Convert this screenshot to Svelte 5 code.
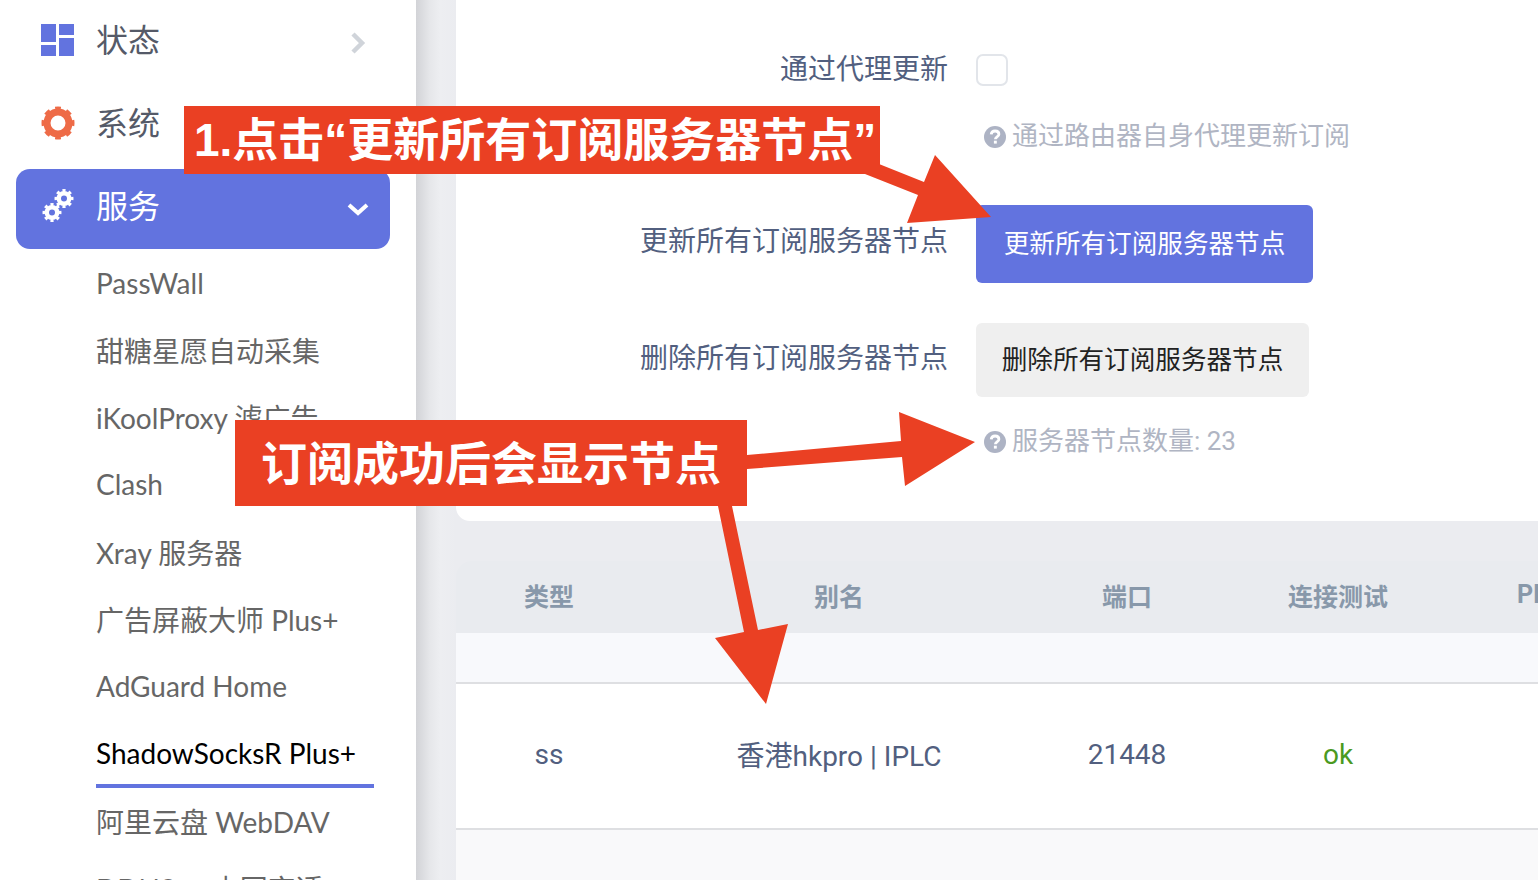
<script>
  const subMenu = ['PassWall', '甜糖星愿自动采集', 'iKoolProxy 滤广告', 'Clash', 'Xray 服务器', '广告屏蔽大师 Plus+', 'AdGuard Home', 'ShadowSocksR Plus+', '阿里云盘 WebDAV', 'DDNS — 内网穿透']
  const active = 'ShadowSocksR Plus+'
  const columns = ['类型', '别名', '端口', '连接测试', 'PING']
</script>

{#snippet help(text)}
  <p class="help">
    <svg class="help-icon" viewBox="0 0 24 24" width="24" height="24">
      <circle cx="12" cy="12" r="11" fill="#adb3c4" />
      <path d="M8.200 9.400c.2-2.200 1.800-3.400 3.900-3.400 2.200 0 3.800 1.300 3.800 3.200 0 2.700-3.500 2.800-3.500 5" fill="none" stroke="#fff" stroke-width="2.800" />
      <rect x="10.900" y="15.700" width="2.900" height="2.900" fill="#fff" />
    </svg>
    {text}
  </p>
{/snippet}

{#snippet gear(cx, cy, r, hole, color)}
  <circle {cx} {cy} r={(r + hole) / 2 - 1} fill="none" stroke={color} stroke-width={r - hole - 2} />
  <circle {cx} {cy} r={r - 1.500} fill="none" stroke={color} stroke-width="3" pathLength="80" stroke-dasharray="5 5" stroke-dashoffset="2.500" />
{/snippet}

<div class="page">
  <aside class="sidebar">
    <div class="menu-item">
      <svg class="menu-icon" viewBox="0 0 34 34" width="34" height="34">
        <g fill="#6273df">
          <rect x="0" y="1" width="15" height="18" />
          <rect x="18" y="1" width="15" height="11" />
          <rect x="0" y="22" width="15" height="11" />
          <rect x="18" y="15" width="15" height="18" />
        </g>
      </svg>
      <span>状态</span>
      <svg class="chevron right" viewBox="0 0 20 24" width="20" height="24">
        <path d="M5 3l9 9-9 9" fill="none" stroke="#d0d4da" stroke-width="4.500" />
      </svg>
    </div>
    <div class="menu-item system">
      <svg class="menu-icon" viewBox="0 0 34 34" width="34" height="34">
        {@render gear(17, 17, 16.500, 7.500, '#ee6b47')}
      </svg>
      <span>系统</span>
    </div>
    <div class="menu-item open">
      <svg class="menu-icon" viewBox="0 0 34 34" width="34" height="34">
        {@render gear(11, 20.500, 9.500, 3, '#fff')}
        {@render gear(23, 6.500, 9.500, 3, '#fff')}
      </svg>
      <span>服务</span>
      <svg class="chevron down" viewBox="0 0 24 24" width="24" height="24">
        <path d="M3 8l9 8 9-8" fill="none" stroke="#fff" stroke-width="4" />
      </svg>
    </div>
    <ul class="sub-menu">
      {#each subMenu as item}
        <li class:active={item === active}>{item}</li>
      {/each}
    </ul>
  </aside>

  <main class="main">
    <section class="card">
      <div class="row first">
        <span class="label">通过代理更新</span>
        <span class="checkbox"></span>
      </div>
      <div class="row help-row one">
        <span></span>
        {@render help('通过路由器自身代理更新订阅')}
      </div>
      <div class="row update">
        <span class="label">更新所有订阅服务器节点</span>
        <button class="btn btn-primary">更新所有订阅服务器节点</button>
      </div>
      <div class="row remove">
        <span class="label">删除所有订阅服务器节点</span>
        <button class="btn btn-plain">删除所有订阅服务器节点</button>
      </div>
      <div class="row help-row two">
        <span></span>
        {@render help('服务器节点数量: 23')}
      </div>
    </section>

    <section class="table">
      <div class="tr thead">
        {#each columns as col}
          <div>{col}</div>
        {/each}
      </div>
      <div class="spacer"></div>
      <div class="tr tbody">
        <div>ss</div>
        <div>香港hkpro | IPLC</div>
        <div>21448</div>
        <div class="ok">ok</div>
        <div></div>
      </div>
      <div class="foot"></div>
    </section>
  </main>

  <!-- annotations drawn on top of the screenshot -->
  <svg class="arrows" viewBox="0 0 1538 880" width="1538" height="880">
    <g fill="#ea4023">
      <polygon points="865,174 879,164 924,182 935,155 991,217 907,223 918,195" />
      <polygon points="747,455 901,441 899,412 975,442 905,486 902,457 747,469" />
      <polygon points="718,506 732,506 758,630 788,624 766,704 715,638 744,632" />
    </g>
  </svg>
  <div class="note note-one">1.点击“更新所有订阅服务器节点”</div>
  <div class="note note-two">订阅成功后会显示节点</div>
</div>

<style>
  :global(body) {
    margin: 0;
    overflow: hidden;
  }

  .page {
    position: relative;
    display: flex;
    width: 1538px;
    height: 880px;
    overflow: hidden;
    font-family: "Roboto", "Noto Sans CJK SC", sans-serif;
    background: #f7f8fb;
  }

  .sidebar {
    flex: 0 0 416px;
    background: #fff;
    padding-left: 16px;
    box-sizing: border-box;
    height: 880px;
    overflow: hidden;
  }

  .menu-item {
    display: flex;
    align-items: center;
    width: 374px;
    height: 80px;
    box-sizing: border-box;
    padding: 0 20px 0 25px;
    font-size: 32px;
    color: #555a68;
    margin-bottom: 3px;
  }

  .menu-item span {
    margin-left: 21px;
    padding-bottom: 4px;
    flex: 1;
  }

  .menu-icon {
    flex: none;
    overflow: visible;
  }

  .chevron.right {
    margin: 6px 2px 0 0;
  }

  .menu-item.system {
    margin-bottom: 6px;
  }

  .menu-item.open {
    margin-bottom: 1px;
    background: #6273df;
    border-radius: 14px;
    color: #fff;
  }

  .menu-item.open span {
    padding-bottom: 10px;
  }

  .sub-menu {
    list-style: none;
    margin: 0;
    padding: 0;
  }

  .sub-menu li {
    height: 67.25px;
    box-sizing: border-box;
    margin-left: 80px;
    width: 278px;
    padding-bottom: 2px;
    display: flex;
    align-items: center;
    font-family: "Lato", "Noto Sans CJK SC", sans-serif;
    font-size: 28px;
    color: #666;
    white-space: nowrap;
  }

  .sub-menu li.active {
    color: #000;
    padding: 2px 0 0;
    border-bottom: 4px solid #6273df;
  }

  .main {
    flex: 1;
    min-width: 0;
    padding-left: 40px;
    background: linear-gradient(90deg, #d2d3d7 0, #e6e7ea 14px, #edeef1 24px, #ebecf0 40px);
  }

  .card {
    height: 521px;
    box-sizing: border-box;
    padding-top: 52px;
    background: #fff;
    border-bottom-left-radius: 14px;
  }

  .row {
    display: grid;
    grid-template-columns: 492px auto;
    column-gap: 28px;
    align-items: center;
    justify-items: start;
  }

  .label {
    justify-self: end;
    font-size: 28px;
    color: #525f7f;
    line-height: 36px;
  }

  .update .label {
    padding-bottom: 4px;
  }

  .remove .label {
    padding-bottom: 2px;
  }

  .checkbox {
    width: 32px;
    height: 32px;
    box-sizing: border-box;
    border: 2px solid #e2e5ea;
    border-radius: 7px;
    background: #fff;
  }

  .help-row.one {
    margin-top: 30px;
  }

  .help-row.two {
    margin-top: 26px;
  }

  .update {
    margin-top: 51px;
  }

  .remove {
    margin-top: 40px;
  }

  .help {
    display: flex;
    align-items: center;
    gap: 5px;
    margin: 0 0 0 7px;
    font-size: 26px;
    line-height: 36px;
    color: #b0b5c3;
  }

  .help-icon {
    flex: none;
    margin-top: 2px;
  }

  .btn {
    border: 0;
    border-radius: 6px;
    font-family: inherit;
    font-size: 25.6px;
    padding: 0 0 6px;
  }

  .btn-primary {
    width: 337px;
    height: 78px;
    background: #6273df;
    color: #fff;
  }

  .btn-plain {
    width: 333px;
    height: 74px;
    background: #efefef;
    color: #222;
  }

  .table {
    width: 1178px;
    margin-top: 40px;
  }

  .tr {
    display: grid;
    grid-template-columns: 186px 394px 182px 240px 176px;
    align-items: center;
    justify-items: center;
  }

  .thead {
    height: 72px;
    box-sizing: border-box;
    padding-bottom: 5px;
    background: #e9ebef;
    border-top-left-radius: 16px;
    font-size: 25px;
    font-weight: 700;
    color: #8898aa;
  }

  .spacer {
    height: 49px;
    background: #f8f9fc;
    border-bottom: 2px solid #dedfe2;
  }

  .tbody {
    height: 146px;
    box-sizing: border-box;
    padding-bottom: 4px;
    background: #fff;
    border-bottom: 2px solid #dedfe2;
    font-size: 28px;
    color: #525f7f;
  }

  .ok {
    color: #4b9a1f;
  }

  .foot {
    height: 50px;
    background: #f9f9fa;
  }

  .arrows {
    position: absolute;
    left: 0;
    top: 0;
    pointer-events: none;
  }

  .note {
    position: absolute;
    box-sizing: border-box;
    display: flex;
    align-items: center;
    background: #ea4023;
    color: #fff;
    font-family: "Liberation Sans", "Noto Sans CJK SC", sans-serif;
    font-size: 46px;
    font-weight: 700;
    white-space: nowrap;
  }

  .note-one {
    left: 184px;
    top: 106px;
    width: 696px;
    height: 68px;
    padding: 0 0 8px 10px;
  }

  .note-two {
    left: 235px;
    top: 420px;
    width: 512px;
    height: 86px;
    padding: 0 0 6px 26px;
  }
</style>
